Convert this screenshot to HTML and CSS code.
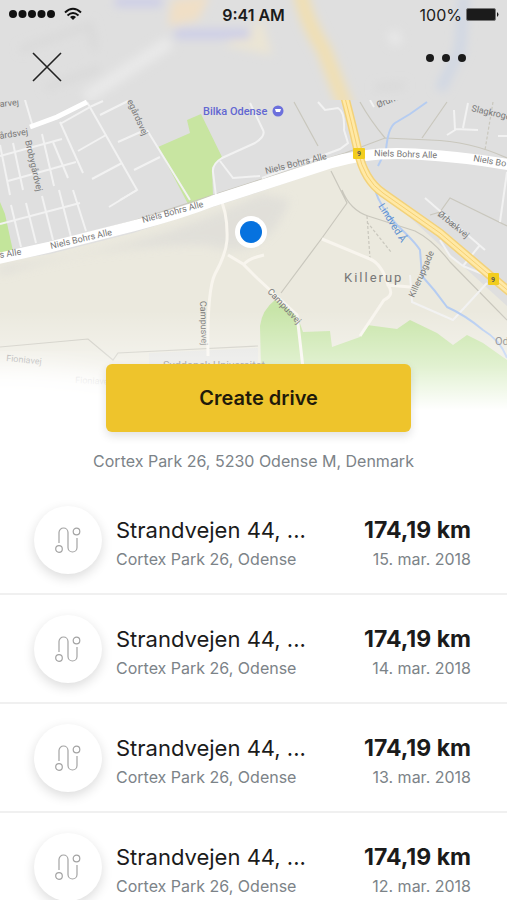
FILE: index.html
```
<!DOCTYPE html>
<html lang="en">
<head>
  <meta charset="UTF-8" />
  <meta name="viewport" content="width=device-width, initial-scale=1.0" />
  <title>Create drive</title>
  <link rel="stylesheet" href="styles.css">
</head>
<body>
  <header class="hero">
    <svg class="map" viewBox="0 0 507 410" preserveAspectRatio="xMidYMin slice" aria-hidden="true">
      <defs>
        <linearGradient id="fade" x1="0" y1="0" x2="0" y2="1">
          <stop offset="0" stop-color="#fff" stop-opacity="0" />
          <stop offset="0.55" stop-color="#fff" stop-opacity="0.45" />
          <stop offset="1" stop-color="#fff" />
        </linearGradient>
        <filter id="soft" x="-20%" y="-20%" width="140%" height="140%"><feGaussianBlur stdDeviation="5" /></filter>
        <filter id="haze" x="-20%" y="-20%" width="140%" height="140%"><feGaussianBlur stdDeviation="14" /></filter>
        <clipPath id="top"><rect width="507" height="100" /></clipPath>
        <clipPath id="bottom"><rect y="100" width="507" height="310" /></clipPath>
      </defs>

      <rect width="507" height="410" fill="#dfdfdf" />

      <g clip-path="url(#bottom)">
        <!-- land -->
        <path d="M0 262L50 254L133 233L250 195L330 168L357 160L380 190L430 236L507 306V410H0Z" fill="#ebe9de" />
        <path d="M0 266Q130 255 262 194L290 200Q265 265 205 245Q100 245 0 275Z" fill="#dddcd8" opacity="0.7" filter="url(#soft)" />
        <path d="M158 147L190 133L187 120L201 114L222 157L212 168L213 196L188 204Z" fill="#c8e5a1" />
        <path d="M0 202L5 214L13 251L0 254Z" fill="#c3e59b" />
        <path d="M275 300L297 315L303 332L330 331L332 347L360 337L367 325L397 329L410 320L437 333L453 345L467 335L483 343L507 360V410H262L260 326Q262 310 275 300Z" fill="#c8e5a9" />
        <path d="M149 353L258 348V375H149Z" fill="#e3e3e0" />

        <!-- footpaths and borders -->
        <g fill="none" stroke="#c9c7bd" stroke-width="1.2">
          <path d="M0 256L133 221L250 183L345 153L385 138L430 140Q470 141 507 158" />
          <path d="M294 102L318 146M360 102Q370 120 385 138M447 102L422 138" />
          <path d="M331 171L347 203L322 238L281 293M342 190Q350 210 368 216L415 231Q433 240 450 262L507 320" />
          <path d="M0 347L88 339L113 360L118 353L258 346M430 215L440 212L450 198L507 226" />
          <path d="M367 216L370 258M367 222L391 252M493 102L485 150" stroke-dasharray="3 2" />
        </g>

        <!-- side streets -->
        <g fill="none" stroke="#f2f2f2" stroke-width="2">
          <path d="M25 100L33 127M60 122L83 173M87 102L137 190L120 200M147 130L190 200M60 124L92 106L103 101M100 115L128 101" />
          <path d="M78 151L106 135M92 179L122 163M118 142L145 130M134 170L160 157M0 156L62 139M8 181L76 162M0 224L80 203M109 207L137 190" />
          <path d="M0 145L10 195M13 143L23 190M42 134L54 186M53 142L68 178M11 205L21 247M26 203L36 243M42 196L53 240M59 190L71 237M73 190L86 231" />
          <path d="M318 102L325 110L338 108Q345 112 344 130L348 143L340 149L262 178M370 100L374 107M250 103L263 130Q266 136 255 143L222 158Q212 164 213 172L216 196M220 161L233 178L260 176" />
          <path d="M454 110L455 130L447 135M455 129L478 130M463 128L468 103M498 136H507M507 172L500 222M425 198L485 250M480 245L463 266M410 275L412 302L453 320L487 283M463 266L490 277M440 240L450 256L463 266" />
        </g>
        <g fill="none" stroke="#f8f5ee" stroke-width="3">
          <path d="M219 196Q228 212 227 240Q226 254 215 274Q207 290 208 356M228 255L243 264L257 278L297 315L303 368M244 264Q250 258 264 255" />
          <path d="M322 239L370 259Q382 264 388 285L410 287M388 285Q395 295 384 300L360 336" />
        </g>

        <!-- stream -->
        <path d="M427 102L410 114L395 123Q388 128 386 150L378 166M375 190Q380 207 398 226Q415 242 420 250L422 276Q435 290 447 307Q465 315 483 330Q500 340 507 358" fill="none" stroke="#b5ccf1" stroke-width="2" />

        <!-- main roads -->
        <path d="M30 127L57 117L87 102" fill="none" stroke="#fff" stroke-width="5" />
        <path d="M-4 259L50 247L133 226Q180 214 213 201L250 189L330 163Q370 151 415 154Q465 157 511 165" fill="none" stroke="#fff" stroke-width="11" />
        <path d="M344 94Q351 120 358 151Q364 180 383 193L440 233L493 278L511 293" fill="none" stroke="#f3d27a" stroke-width="9" />
        <path d="M344 94Q351 120 358 151Q364 180 383 193L440 233L493 278L511 293" fill="none" stroke="#ffe9a6" stroke-width="6" />
        <path d="M344 94Q351 120 358 151Q364 180 383 193L440 233L493 278L511 293" fill="none" stroke="#f6cf72" stroke-width="1" />
        <g class="shield">
          <rect x="353" y="148" width="12" height="11" rx="1" />
          <rect x="488" y="273" width="11" height="12" rx="1" />
          <text x="359" y="156">9</text>
          <text x="493" y="282">9</text>
        </g>

        <g class="label">
          <text transform="translate(143 223) rotate(-15)">Niels Bohrs Alle</text>
          <text transform="translate(51 249) rotate(-13)">Niels Bohrs Alle</text>
          <text transform="translate(0 258) rotate(-9)">s Alle</text>
          <text transform="translate(266 174) rotate(-14)">Niels Bohrs Alle</text>
          <text transform="translate(374 156) rotate(2)">Niels Bohrs Alle</text>
          <text transform="translate(473 161) rotate(10)">Niels Bo</text>
          <text transform="translate(0 139) rotate(-9)">årdsvej</text>
          <text transform="translate(0 107) rotate(-6)">arvej</text>
          <text transform="translate(25 141) rotate(77)">Brobygårdvej</text>
          <text transform="translate(127 101) rotate(66)">egårdsvej</text>
          <text transform="translate(471 111) rotate(13)">Slagkroge</text>
          <text transform="translate(378 108) rotate(-22)">Ørum</text>
          <text transform="translate(437 215) rotate(39)">Ørbækvej</text>
          <text transform="translate(414 298) rotate(-66)">Killerupgade</text>
          <text transform="translate(267 292) rotate(47)">Campusvej</text>
          <text transform="translate(200 301) rotate(88)">Campusvej</text>
          <text transform="translate(6 361) rotate(6)">Fioniavej</text>
          <text transform="translate(75 383) rotate(3)">Fioniavej</text>
          <text class="label-campus" x="163" y="369">Syddansk Universitet</text>
          <text class="label-campus" x="495" y="345">Od</text>
        </g>
        <text class="label label-water" transform="translate(378 206) rotate(58)">Lindved Å</text>
        <text class="label-town" x="344" y="282">Killerup</text>
        <text class="label-shop" x="203" y="115">Bilka Odense</text>
        <circle cx="278" cy="111" r="5.5" fill="#6c70dc" />
        <path d="M275 109H281L280 112H276Z" fill="#fff" />
      </g>

      <!-- out of focus strip behind the toolbar -->
      <g clip-path="url(#top)">
        <g filter="url(#soft)" fill="none">
          <path d="M172 0L210 -5L198 20L168 26Z" fill="#f0dfc6" />
          <path d="M225 45L262 20L272 55Z" fill="#ebe5d4" />
          <path d="M115 2H162M175 34H250" stroke="#cbcce8" stroke-width="9" />
          <path d="M85 98L170 42M390 40L400 36" stroke="#e9e9e9" stroke-width="13" />
          <path d="M20 50L90 25L95 50M45 88L100 68M375 88L405 85" stroke="#d8d8d8" stroke-width="6" />
          <path d="M300 -10Q305 20 324 50L347 110" stroke="#f0dfb4" stroke-width="15" />
          <path d="M464 -5L460 50L440 90" stroke="#d0d7e3" stroke-width="11" />
        </g>
      </g>

      <rect y="310" width="507" height="100" fill="url(#fade)" />
      <ellipse cx="0" cy="405" rx="150" ry="38" fill="#fff" filter="url(#haze)" />
      <circle cx="251" cy="232" r="16" fill="#fff" />
      <circle cx="251" cy="232" r="11" fill="#0672df" />
    </svg>

    <div class="status-bar">
      <div class="status-side">
        <svg width="74" height="16" viewBox="0 0 74 16" role="img" aria-label="Signal and Wi-Fi">
          <g fill="#111">
            <circle cx="5" cy="7" r="4" />
            <circle cx="14.5" cy="7" r="4" />
            <circle cx="24" cy="7" r="4" />
            <circle cx="33.5" cy="7" r="4" />
            <circle cx="43" cy="7" r="4" />
            <path d="M65 13L62 10Q65 7.5 68 10Z" />
          </g>
          <path d="M57 5.5Q65 -2 73 5.5M59.500 8.500Q65 3.500 70.500 8.500" fill="none" stroke="#111" stroke-width="1.9" />
        </svg>
      </div>
      <time class="status-time">9:41 AM</time>
      <div class="status-side status-right">
        <span>100%</span>
        <svg width="33" height="14" viewBox="0 0 33 14" aria-hidden="true">
          <rect x="0.5" y="0.5" width="29" height="12" rx="1.5" fill="#1b1b1b" stroke="#777" />
          <path d="M31 4Q34 6.5 31 9Z" fill="#1b1b1b" />
        </svg>
      </div>
    </div>

    <nav class="toolbar">
      <button class="icon-button" aria-label="Close">
        <svg width="30" height="30" viewBox="0 0 30 30"><path d="M1 1L29 29M29 1L1 29" stroke="#222" stroke-width="1.6" /></svg>
      </button>
      <button class="icon-button" aria-label="More">
        <svg width="42" height="12" viewBox="0 0 42 12" fill="#1b1b1b">
          <circle cx="5" cy="6" r="4" />
          <circle cx="21" cy="6" r="4" />
          <circle cx="37" cy="6" r="4" />
        </svg>
      </button>
    </nav>

    <button class="create-button">Create drive</button>
  </header>

  <main>
    <p class="address">Cortex Park 26, 5230 Odense M, Denmark</p>

    <ul class="drives">
      <li class="drive">
        <div class="drive-icon"><svg><use href="#route" /></svg></div>
        <div class="drive-place">
          <h2>Strandvejen 44, ...</h2>
          <p>Cortex Park 26, Odense</p>
        </div>
        <div class="drive-info">
          <strong>174,19 km</strong>
          <p>15. mar. 2018</p>
        </div>
      </li>
      <li class="drive">
        <div class="drive-icon"><svg><use href="#route" /></svg></div>
        <div class="drive-place">
          <h2>Strandvejen 44, ...</h2>
          <p>Cortex Park 26, Odense</p>
        </div>
        <div class="drive-info">
          <strong>174,19 km</strong>
          <p>14. mar. 2018</p>
        </div>
      </li>
      <li class="drive">
        <div class="drive-icon"><svg><use href="#route" /></svg></div>
        <div class="drive-place">
          <h2>Strandvejen 44, ...</h2>
          <p>Cortex Park 26, Odense</p>
        </div>
        <div class="drive-info">
          <strong>174,19 km</strong>
          <p>13. mar. 2018</p>
        </div>
      </li>
      <li class="drive">
        <div class="drive-icon"><svg><use href="#route" /></svg></div>
        <div class="drive-place">
          <h2>Strandvejen 44, ...</h2>
          <p>Cortex Park 26, Odense</p>
        </div>
        <div class="drive-info">
          <strong>174,19 km</strong>
          <p>12. mar. 2018</p>
        </div>
      </li>
    </ul>
  </main>

  <svg class="symbols" width="0" height="0" aria-hidden="true">
    <symbol id="route" viewBox="0 0 26 26">
      <g fill="none" stroke="#a3a3a3" stroke-width="1.2">
        <circle cx="4" cy="22" r="3.3" />
        <circle cx="21.5" cy="4.5" r="3.3" />
        <path d="M4 16V5.500A4.500 4.500 0 0 1 13 5.500V20.500A4.500 4.500 0 0 0 22 20.500V11" />
      </g>
    </symbol>
  </svg>
</body>
</html>
```
FILE: styles.css
```
* {
  box-sizing: border-box;
}
body {
  margin: 0;
  background: #fff;
  color: #1b1b1b;
  font-family: Inter, "Liberation Sans", sans-serif;
  overflow-x: hidden;
}
h2, p, ul {
  margin: 0;
  padding: 0;
}
button {
  border: none;
  font-family: inherit;
  cursor: pointer;
}

/* map header */
.hero {
  position: relative;
  display: flex;
  flex-direction: column;
  min-height: 432px;
}
.map {
  position: absolute;
  top: 0;
  left: 0;
  z-index: -1;
  width: 100%;
  height: 410px;
}
.label {
  font-family: Roboto, sans-serif;
  font-size: 9px;
  fill: #777;
}
.label-campus {
  font-size: 11px;
}
.label-water {
  font-size: 10px;
  fill: #5b8fd0;
}
.label-town {
  font-family: Roboto, sans-serif;
  font-size: 13px;
  letter-spacing: 2px;
  fill: #777;
}
.label-shop {
  font-family: Roboto, sans-serif;
  font-size: 11px;
  font-weight: 500;
  fill: #6267d2;
}
.shield {
  font-family: Roboto, sans-serif;
  font-size: 7px;
  font-weight: bold;
  text-anchor: middle;
}
.shield rect {
  fill: #f2cd1e;
}
.shield text {
  fill: #555;
}

.status-bar {
  display: flex;
  align-items: center;
  height: 30px;
  padding: 0 8px;
  font-size: 16px;
}
.status-side {
  display: flex;
  flex: 1;
  align-items: center;
  gap: 4px;
}
.status-right {
  justify-content: flex-end;
}
.status-time {
  font-weight: 600;
}
.toolbar {
  display: flex;
  justify-content: space-between;
  align-items: flex-start;
  padding: 22px 40px 0 32px;
}
.icon-button {
  display: flex;
  padding: 0;
  background: none;
}
.create-button {
  margin: auto 19% 0 21%;
  padding: 22px;
  border-radius: 6px;
  background: #eec42c;
  box-shadow: 0 4px 10px rgba(0, 0, 0, 0.12);
  color: #1f1a0a;
  font-size: 20px;
  font-weight: 600;
  line-height: 24px;
}

.address {
  padding: 18px 16px 14px;
  color: #7c8388;
  font-size: 16px;
  line-height: 22px;
  text-align: center;
}

/* list of drives */
.drives {
  list-style: none;
}
.drive {
  display: flex;
  align-items: center;
  gap: 14px;
  padding: 20px 36px 19px 34px;
  border-bottom: 2px solid #f0f0f0;
}
.drive-icon {
  display: flex;
  align-items: center;
  justify-content: center;
  width: 68px;
  height: 68px;
  border-radius: 50%;
  background: #fff;
  box-shadow: 0 4px 12px rgba(0, 0, 0, 0.14);
}
.drive-icon svg {
  width: 26px;
  height: 26px;
}
.drive-place,
.drive-info {
  padding-top: 6px;
}
.drive-place {
  flex: 1;
}
.drive-info {
  text-align: right;
}
.drive h2,
.drive strong {
  display: block;
  font-size: 22px;
  font-weight: 400;
  line-height: 32px;
}
.drive strong {
  font-size: 23px;
  font-weight: 700;
}
.drive p {
  color: #7c8388;
  font-size: 16px;
  line-height: 26px;
}
.symbols {
  position: absolute;
}
```
